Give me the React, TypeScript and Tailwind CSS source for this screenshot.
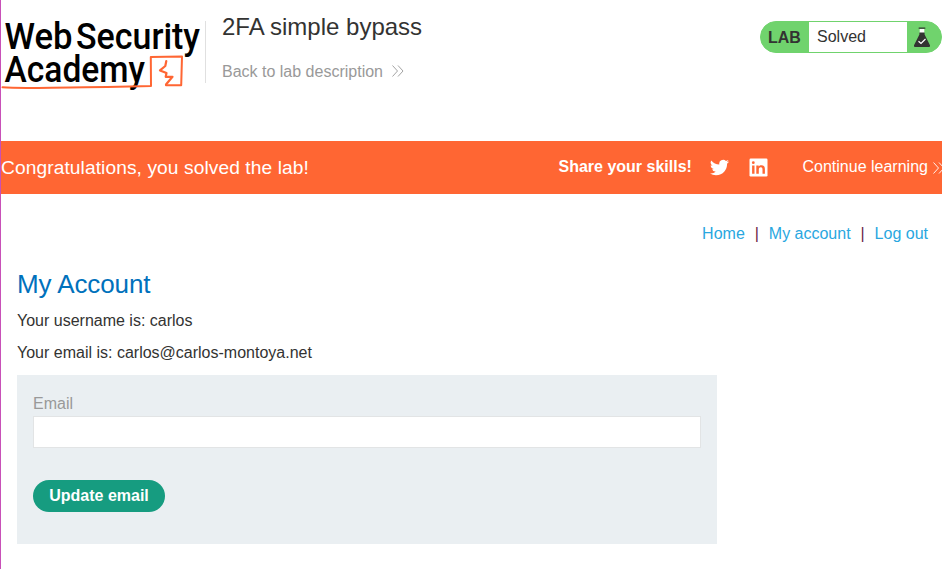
import React from "react";

function Chevrons({ className, width = 12 }: { className: string; width?: number }) {
  return (
    <svg className={className} width={width} height="12" viewBox="0 0 12 12" fill="none" stroke="currentColor" strokeWidth="0.9">
      <path d="M0.5 0.5 5.5 6 0.5 11.5M6 0.5 11 6 6 11.5" />
    </svg>
  );
}

function Logo() {
  return (
    <svg className="shrink-0 overflow-visible" width="204" height="94" viewBox="1 0 204 94">
      <g fontFamily="Roboto, 'Open Sans', sans-serif" fontWeight="500" fontSize="37" fill="#000">
        <text x="4.5" y="49.3" textLength="68" lengthAdjust="spacingAndGlyphs">Web</text>
        <text x="76" y="49.3" textLength="124" lengthAdjust="spacingAndGlyphs">Security</text>
        <text x="4.5" y="82" textLength="140.5" lengthAdjust="spacingAndGlyphs">Academy</text>
      </g>
      <g fill="none" stroke="#ff6633" strokeWidth="2" strokeLinejoin="round" strokeLinecap="round">
        <path d="M2.5 87.3C22 88.8 48 87.4 85 87.2S130 86.3 151 86.1L150.8 57 182 56.5 181.2 85.2 166 85.2" />
        <path strokeWidth="2.2" d="M166.3 61 165.3 66 160 70.4 166.5 73 165.7 76.8 172.5 76.8 166 84.5" />
      </g>
    </svg>
  );
}

function Flask() {
  return (
    <svg width="18" height="21" viewBox="0 0 18 21" className="ml-[6px]">
      <rect x="5.5" y="0.5" width="7" height="1.2" rx="0.6" fill="#333332" />
      <path d="M6.7 2h4.6v4H6.7z" fill="#fff" />
      <path d="M6.4 5.5V7.5L1 18.3Q.4 20 2 20h14q1.6 0 1-1.7L11.6 7.5V5.5z" fill="#333332" />
      <path d="M5.5 14.2 8 16.5 12.5 12" fill="none" stroke="#fff" strokeWidth="1.2" />
    </svg>
  );
}

function Twitter() {
  return (
    <svg width="19" height="19" viewBox="0 0 24 24" fill="#fff">
      <path d="M23.95 4.57a10 10 0 0 1-2.82.77 4.96 4.96 0 0 0 2.16-2.72 10 10 0 0 1-3.13 1.19 4.92 4.92 0 0 0-8.38 4.48A13.98 13.98 0 0 1 1.64 3.16a4.92 4.92 0 0 0 1.52 6.57 4.9 4.9 0 0 1-2.23-.61v.06a4.92 4.92 0 0 0 3.95 4.83 5 5 0 0 1-2.21.08 4.94 4.94 0 0 0 4.6 3.42A9.87 9.87 0 0 1 0 19.54a14 14 0 0 0 7.55 2.21c9.05 0 14-7.5 14-13.98 0-.21 0-.42-.02-.63a9.94 9.94 0 0 0 2.46-2.55z" />
    </svg>
  );
}

function LinkedIn() {
  return (
    <svg width="19" height="19" viewBox="0 0 19 19">
      <rect x="0.5" y="0.5" width="18" height="18" rx="1.2" fill="#fff" />
      <g fill="#ff6633">
        <circle cx="4.3" cy="4.7" r="1.4" />
        <path d="M3.1 7.4H5.5v8.4H3.1zM7.3 7.4H9.7v1.2c.5-.9 1.5-1.4 2.7-1.4 2.8 0 3.5 1.6 3.5 4v4.6h-2.4v-4.1c0-1.2-.2-2.4-1.7-2.4s-2 1-2 2.4v4.1H7.3z" />
      </g>
    </svg>
  );
}

export default function App() {
  return (
    <div className="h-[569px] w-[942px] overflow-hidden border-l border-[#c850b8] bg-white font-['Liberation_Sans',Arial,sans-serif] text-base leading-5 text-[#333332]">
      <header className="flex h-[141px] items-start">
        <Logo />
        <div className="mt-[21px] h-[62px] w-px bg-[#e0e0e0]" />
        <div className="ml-4 flex-1 pt-3">
          <h2 className="text-2xl leading-[30px]">2FA simple bypass</h2>
          <a className="mt-5 flex items-center text-[#999999]">
            Back to lab description
            <Chevrons className="mb-0.5 ml-[9px]" />
          </a>
        </div>
        <div className="mt-[21px] flex h-8 w-[182px] overflow-hidden rounded-full border border-[#70d36d] bg-[#70d36d]">
          <span className="w-12 pl-[7px] text-base leading-[31px] font-bold">LAB</span>
          <span className="w-[98px] bg-white pl-2 leading-[29px]">Solved</span>
          <span className="flex flex-1 items-center"><Flask /></span>
        </div>
      </header>
      <section className="flex h-[53px] items-center overflow-hidden bg-[#ff6633] text-white">
        <p className="w-[557.5px] shrink-0 text-[19.2px] tracking-[0.08px]">Congratulations, you solved the lab!</p>
        <span className="w-[151.5px] shrink-0 pb-0.5 font-bold whitespace-nowrap">Share your skills!</span>
        <span className="w-[39px] shrink-0"><Twitter /></span>
        <span className="w-[53.5px] shrink-0"><LinkedIn /></span>
        <span className="shrink-0 pb-0.5">Continue learning</span>
        <Chevrons className="ml-[5px] shrink-0" />
      </section>
      <nav className="mt-[30px] flex h-5 justify-end pr-[14px] text-[#29a7df]">
        <a>Home</a>
        <span className="w-6 text-center text-[#6b1d45]">|</span>
        <a>My account</a>
        <span className="w-6 text-center text-[#6b1d45]">|</span>
        <a>Log out</a>
      </nav>
      <main className="ml-4 w-[700px] pt-[25px]">
        <h1 className="text-[26px] leading-[30px] tracking-[-0.1px] text-[#0071bc]">My Account</h1>
        <p className="mt-3">Your username is: carlos</p>
        <p className="mt-3">Your email is: carlos@carlos-montoya.net</p>
        <form className="mt-3 h-[169px] bg-[#eaeff2] px-4 pt-[19px]">
          <label className="block text-[#999999]" htmlFor="email">Email</label>
          <input id="email" className="mt-0.5 block h-8 w-full border border-[#e2e4e5] bg-white px-2 outline-none" />
          <button type="button" className="mt-8 h-8 w-[132px] rounded-full bg-[#169c80] pb-px font-bold text-white">Update email</button>
        </form>
      </main>
    </div>
  );
}
